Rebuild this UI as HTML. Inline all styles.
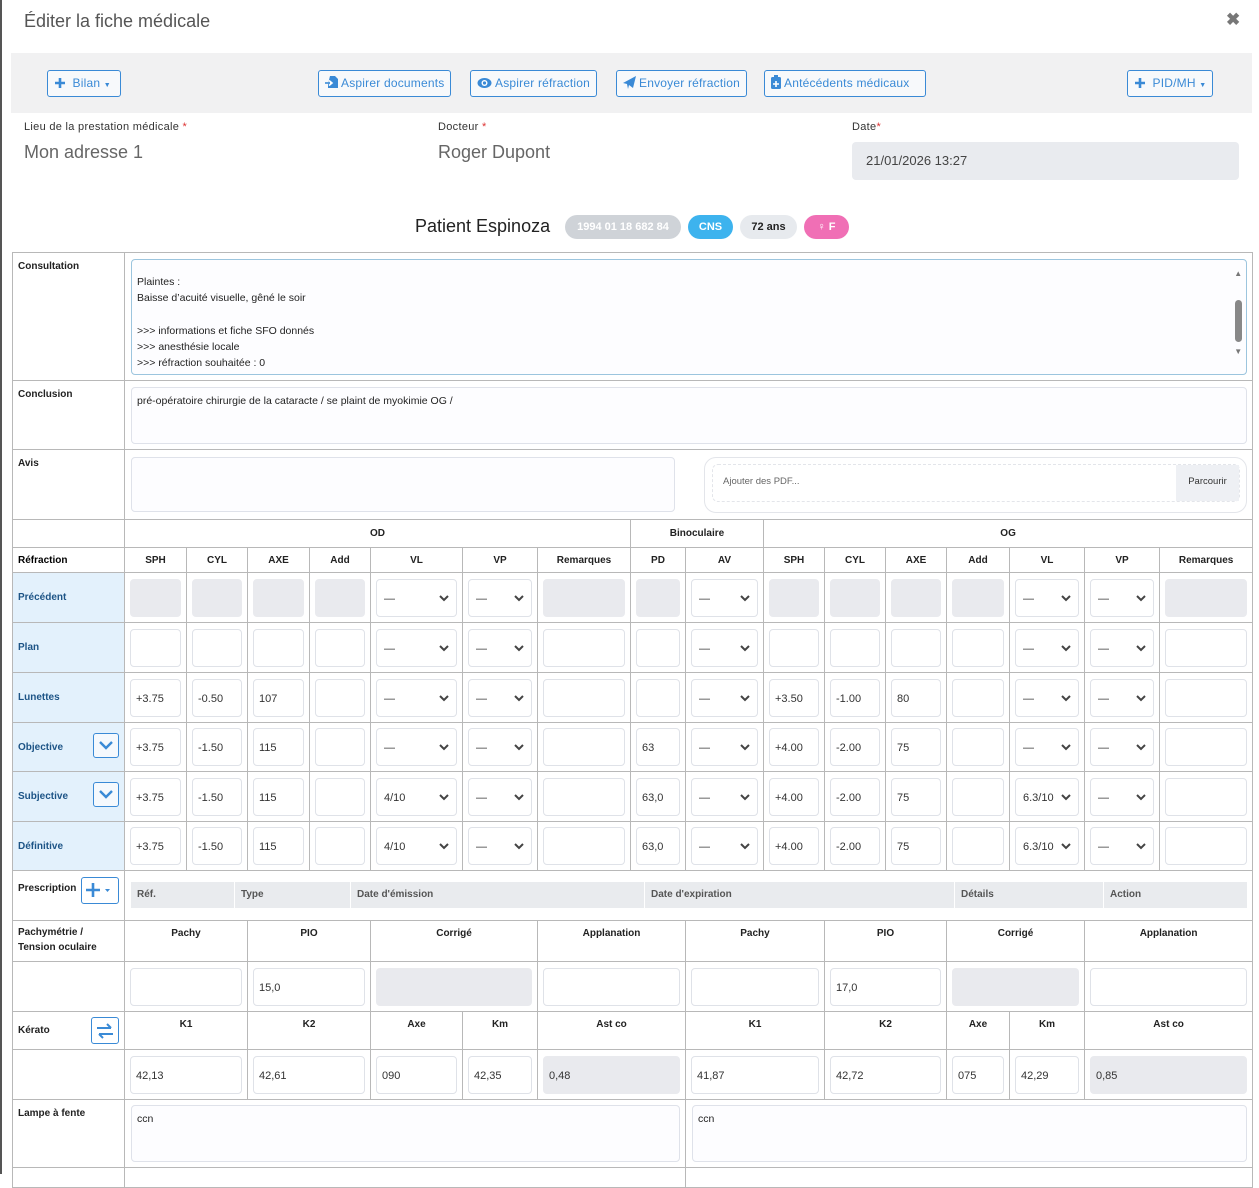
<!DOCTYPE html>
<html><head><meta charset="utf-8">
<style>
*{box-sizing:border-box;margin:0;padding:0}
body{width:1259px;height:1174px;background:#fff;font-family:"Liberation Sans",sans-serif;position:relative;overflow:hidden}
.a{position:absolute}
.title{left:24px;top:11px;font-size:18px;color:#555}
.close{left:1226px;top:10px;font-size:17px;color:#777;font-weight:bold}
.bar{left:11px;top:53px;width:1241px;height:60px;background:#f1f1f2}
.btn{position:absolute;top:70px;height:27px;border:1px solid #3a8ad6;border-radius:3px;color:#3a8ad6;font-size:12px;line-height:25px;padding:0 6px;background:#f7f9fb;white-space:nowrap;letter-spacing:.2px}
.btn svg{vertical-align:-2px;margin-right:3px}
.lbl{font-size:11px;color:#333;letter-spacing:.3px}
.lbl b{color:#d33;font-weight:normal}
.val{font-size:18px;color:#666}
.badge{position:absolute;top:215px;height:24px;border-radius:12px;font-size:11px;font-weight:bold;line-height:24px;text-align:center}
table{position:absolute;left:12px;top:252px;width:1240px;border-collapse:collapse;table-layout:fixed;font-size:10px}
td{border:1px solid #b8b8b8;padding:0 5px;vertical-align:middle}
td.h{font-weight:bold;text-align:center;color:#222}
td.l{font-weight:bold;color:#222;vertical-align:top;padding-top:8px}
td.r{background:#e3f1fc;color:#1d5486;font-weight:bold;vertical-align:middle;padding-top:0;position:relative}
.i{height:38px;border:1px solid #dfe2e8;border-radius:4px;font-size:11px;line-height:38px;padding-left:5px;color:#333;background:#fff}
.g{background:#e9eaee;border-color:#e9eaee}
.s{height:38px;border:1px solid #dfe2e8;border-radius:4px;font-size:11px;line-height:38px;padding-left:7px;color:#333;position:relative;background:#fff}
.s svg{position:absolute;right:7px;top:15px}
.ta{border:1px solid #dfe2ea;border-radius:4px;background:#fdfdff;position:relative;font-size:10.5px;color:#222}
.sq{position:absolute;right:5px;top:10px;width:26px;height:25px;border:1px solid #3a8ad6;border-radius:3px;background:#f5f9fd}
</style></head><body>
<div class="a" style="left:0;top:0;width:2px;height:1174px;background:#555"></div>
<div class="a title">Éditer la fiche médicale</div>
<div class="a close">✖</div>
<div class="a bar"></div>
<div class="btn" style="left:47px;width:74px"><svg width="12" height="12"><path d="M6 1v10M1 6h10" stroke="#3a8ad6" stroke-width="2.6"/></svg> Bilan <span style="font-size:7px">▼</span></div>
<div class="btn" style="left:318px"><svg width="13" height="14"><path d="M5 1h5l3 3v9H3V9" fill="#3a8ad6"/><path d="M0 8h6M4 5.5l3 2.5-3 2.5" stroke="#fff" stroke-width="1.6" fill="none"/><path d="M0 8h5" stroke="#3a8ad6" stroke-width="1.6"/></svg>Aspirer documents</div>
<div class="btn" style="left:470px"><svg width="15" height="12"><ellipse cx="7.5" cy="6" rx="7" ry="5" fill="#3a8ad6"/><circle cx="7.5" cy="6" r="3" fill="#fff"/><circle cx="7.5" cy="6" r="1.6" fill="#3a8ad6"/></svg>Aspirer réfraction</div>
<div class="btn" style="left:616px"><svg width="13" height="13"><path d="M0 7L13 0 10 12 6 9 5 13 4 8z" fill="#3a8ad6"/></svg>Envoyer réfraction</div>
<div class="btn" style="left:764px;width:162px"><svg width="10" height="14"><rect x="0" y="2" width="10" height="12" rx="1.5" fill="#3a8ad6"/><rect x="3" y="0" width="4" height="3" fill="#3a8ad6"/><path d="M5 6v6M2 9h6" stroke="#fff" stroke-width="1.6"/></svg>Antécédents médicaux</div>
<div class="btn" style="left:1127px;width:86px"><svg width="12" height="12"><path d="M6 1v10M1 6h10" stroke="#3a8ad6" stroke-width="2.6"/></svg> PID/MH <span style="font-size:7px">▼</span></div>

<div class="a lbl" style="left:24px;top:121px">Lieu de la prestation médicale <b>*</b></div>
<div class="a val" style="left:24px;top:142px">Mon adresse 1</div>
<div class="a lbl" style="left:438px;top:121px">Docteur <b>*</b></div>
<div class="a val" style="left:438px;top:142px">Roger Dupont</div>
<div class="a lbl" style="left:852px;top:121px">Date<b>*</b></div>
<div class="a" style="left:852px;top:142px;width:387px;height:38px;background:#e9ebef;border-radius:4px;font-size:13px;color:#444;line-height:38px;padding-left:14px">21/01/2026 13:27</div>

<div class="a" style="left:415px;top:216px;font-size:18px;color:#222">Patient Espinoza</div>
<div class="badge" style="left:565px;width:116px;background:#cfd3d8;color:#fff">1994 01 18 682 84</div>
<div class="badge" style="left:688px;width:45px;background:#3db3ee;color:#fff">CNS</div>
<div class="badge" style="left:740px;width:57px;background:#e7eaee;color:#222">72 ans</div>
<div class="badge" style="left:804px;width:45px;background:#f06fb5;color:#fff">♀ F</div>

<table>
<colgroup><col style="width:112px"><col style="width:62px"><col style="width:61px"><col style="width:62px"><col style="width:61px"><col style="width:92px"><col style="width:75px"><col style="width:93px"><col style="width:55px"><col style="width:78px"><col style="width:61px"><col style="width:61px"><col style="width:61px"><col style="width:63px"><col style="width:75px"><col style="width:75px"><col style="width:93px"></colgroup>
<tr style="height:128px"><td class="l">Consultation</td><td colspan="16" style="padding:6px 5px 5px 6px;vertical-align:top"><div class="ta" style="height:116px;border-color:#9cc5de;padding:14px 5px 0 5px;line-height:16.3px;font-size:10.5px">Plaintes :<br>Baisse d’acuité visuelle, gêné le soir<br><br>&gt;&gt;&gt; informations et fiche SFO donnés<br>&gt;&gt;&gt; anesthésie locale<br>&gt;&gt;&gt; réfraction souhaitée : 0<div style="position:absolute;right:4px;top:40px;width:7px;height:42px;background:#888;border-radius:4px"></div><div style="position:absolute;right:4px;top:6px;font-size:8px;color:#777">▲</div><div style="position:absolute;right:4px;top:84px;font-size:8px;color:#777">▼</div></div></td></tr>
<tr style="height:69px"><td class="l">Conclusion</td><td colspan="16" style="padding:5px 5px 5px 6px"><div class="ta" style="height:57px;padding:7px 5px">pré-opératoire chirurgie de la cataracte / se plaint de myokimie OG /</div></td></tr>
<tr style="height:70px"><td class="l">Avis</td><td colspan="16" style="padding:0;position:relative"><div class="ta" style="position:absolute;left:6px;top:7px;width:544px;height:55px"></div><div class="a" style="left:579px;top:7px;width:543px;height:56px;border:1px solid #e3e5ea;border-radius:12px"><div class="a" style="left:7px;top:6px;width:528px;height:38px;border:1px dashed #e3e5ea;border-radius:6px;color:#666;font-size:9.5px;line-height:34px;padding-left:10px">Ajouter des PDF...<div class="a" style="right:0;top:0;width:63px;height:36px;background:#eef0f4;color:#333;text-align:center;line-height:34px">Parcourir</div></div></div></td></tr>
<tr style="height:28px"><td></td><td class="h" colspan="7">OD</td><td class="h" colspan="2">Binoculaire</td><td class="h" colspan="7">OG</td></tr>
<tr style="height:25px"><td style="font-weight:bold">Réfraction</td><td class="h">SPH</td><td class="h">CYL</td><td class="h">AXE</td><td class="h">Add</td><td class="h">VL</td><td class="h">VP</td><td class="h">Remarques</td><td class="h">PD</td><td class="h">AV</td><td class="h">SPH</td><td class="h">CYL</td><td class="h">AXE</td><td class="h">Add</td><td class="h">VL</td><td class="h">VP</td><td class="h">Remarques</td></tr>
<tr style="height:50px"><td class="r">Précédent</td><td><div class="i g"></div></td><td><div class="i g"></div></td><td><div class="i g"></div></td><td><div class="i g"></div></td><td><div class="s g">—<svg width="10" height="7"><path d="M1 1l4 4 4-4" stroke="#444" stroke-width="2" fill="none"/></svg></div></td><td><div class="s g">—<svg width="10" height="7"><path d="M1 1l4 4 4-4" stroke="#444" stroke-width="2" fill="none"/></svg></div></td><td><div class="i g"></div></td><td><div class="i g"></div></td><td><div class="s g">—<svg width="10" height="7"><path d="M1 1l4 4 4-4" stroke="#444" stroke-width="2" fill="none"/></svg></div></td><td><div class="i g"></div></td><td><div class="i g"></div></td><td><div class="i g"></div></td><td><div class="i g"></div></td><td><div class="s g">—<svg width="10" height="7"><path d="M1 1l4 4 4-4" stroke="#444" stroke-width="2" fill="none"/></svg></div></td><td><div class="s g">—<svg width="10" height="7"><path d="M1 1l4 4 4-4" stroke="#444" stroke-width="2" fill="none"/></svg></div></td><td><div class="i g"></div></td></tr>
<tr style="height:50px"><td class="r">Plan</td><td><div class="i"></div></td><td><div class="i"></div></td><td><div class="i"></div></td><td><div class="i"></div></td><td><div class="s">—<svg width="10" height="7"><path d="M1 1l4 4 4-4" stroke="#444" stroke-width="2" fill="none"/></svg></div></td><td><div class="s">—<svg width="10" height="7"><path d="M1 1l4 4 4-4" stroke="#444" stroke-width="2" fill="none"/></svg></div></td><td><div class="i"></div></td><td><div class="i"></div></td><td><div class="s">—<svg width="10" height="7"><path d="M1 1l4 4 4-4" stroke="#444" stroke-width="2" fill="none"/></svg></div></td><td><div class="i"></div></td><td><div class="i"></div></td><td><div class="i"></div></td><td><div class="i"></div></td><td><div class="s">—<svg width="10" height="7"><path d="M1 1l4 4 4-4" stroke="#444" stroke-width="2" fill="none"/></svg></div></td><td><div class="s">—<svg width="10" height="7"><path d="M1 1l4 4 4-4" stroke="#444" stroke-width="2" fill="none"/></svg></div></td><td><div class="i"></div></td></tr>
<tr style="height:50px"><td class="r">Lunettes</td><td><div class="i">+3.75</div></td><td><div class="i">-0.50</div></td><td><div class="i">107</div></td><td><div class="i"></div></td><td><div class="s">—<svg width="10" height="7"><path d="M1 1l4 4 4-4" stroke="#444" stroke-width="2" fill="none"/></svg></div></td><td><div class="s">—<svg width="10" height="7"><path d="M1 1l4 4 4-4" stroke="#444" stroke-width="2" fill="none"/></svg></div></td><td><div class="i"></div></td><td><div class="i"></div></td><td><div class="s">—<svg width="10" height="7"><path d="M1 1l4 4 4-4" stroke="#444" stroke-width="2" fill="none"/></svg></div></td><td><div class="i">+3.50</div></td><td><div class="i">-1.00</div></td><td><div class="i">80</div></td><td><div class="i"></div></td><td><div class="s">—<svg width="10" height="7"><path d="M1 1l4 4 4-4" stroke="#444" stroke-width="2" fill="none"/></svg></div></td><td><div class="s">—<svg width="10" height="7"><path d="M1 1l4 4 4-4" stroke="#444" stroke-width="2" fill="none"/></svg></div></td><td><div class="i"></div></td></tr>
<tr style="height:49px"><td class="r">Objective<div class="sq"><svg width="14" height="9" style="position:absolute;left:5px;top:7px"><path d="M1 1l6 6 6-6" stroke="#3a8ad6" stroke-width="2.4" fill="none"/></svg></div></td><td><div class="i">+3.75</div></td><td><div class="i">-1.50</div></td><td><div class="i">115</div></td><td><div class="i"></div></td><td><div class="s">—<svg width="10" height="7"><path d="M1 1l4 4 4-4" stroke="#444" stroke-width="2" fill="none"/></svg></div></td><td><div class="s">—<svg width="10" height="7"><path d="M1 1l4 4 4-4" stroke="#444" stroke-width="2" fill="none"/></svg></div></td><td><div class="i"></div></td><td><div class="i">63</div></td><td><div class="s">—<svg width="10" height="7"><path d="M1 1l4 4 4-4" stroke="#444" stroke-width="2" fill="none"/></svg></div></td><td><div class="i">+4.00</div></td><td><div class="i">-2.00</div></td><td><div class="i">75</div></td><td><div class="i"></div></td><td><div class="s">—<svg width="10" height="7"><path d="M1 1l4 4 4-4" stroke="#444" stroke-width="2" fill="none"/></svg></div></td><td><div class="s">—<svg width="10" height="7"><path d="M1 1l4 4 4-4" stroke="#444" stroke-width="2" fill="none"/></svg></div></td><td><div class="i"></div></td></tr>
<tr style="height:50px"><td class="r">Subjective<div class="sq"><svg width="14" height="9" style="position:absolute;left:5px;top:7px"><path d="M1 1l6 6 6-6" stroke="#3a8ad6" stroke-width="2.4" fill="none"/></svg></div></td><td><div class="i">+3.75</div></td><td><div class="i">-1.50</div></td><td><div class="i">115</div></td><td><div class="i"></div></td><td><div class="s">4/10<svg width="10" height="7"><path d="M1 1l4 4 4-4" stroke="#444" stroke-width="2" fill="none"/></svg></div></td><td><div class="s">—<svg width="10" height="7"><path d="M1 1l4 4 4-4" stroke="#444" stroke-width="2" fill="none"/></svg></div></td><td><div class="i"></div></td><td><div class="i">63,0</div></td><td><div class="s">—<svg width="10" height="7"><path d="M1 1l4 4 4-4" stroke="#444" stroke-width="2" fill="none"/></svg></div></td><td><div class="i">+4.00</div></td><td><div class="i">-2.00</div></td><td><div class="i">75</div></td><td><div class="i"></div></td><td><div class="s">6.3/10<svg width="10" height="7"><path d="M1 1l4 4 4-4" stroke="#444" stroke-width="2" fill="none"/></svg></div></td><td><div class="s">—<svg width="10" height="7"><path d="M1 1l4 4 4-4" stroke="#444" stroke-width="2" fill="none"/></svg></div></td><td><div class="i"></div></td></tr>
<tr style="height:49px"><td class="r">Définitive</td><td><div class="i">+3.75</div></td><td><div class="i">-1.50</div></td><td><div class="i">115</div></td><td><div class="i"></div></td><td><div class="s">4/10<svg width="10" height="7"><path d="M1 1l4 4 4-4" stroke="#444" stroke-width="2" fill="none"/></svg></div></td><td><div class="s">—<svg width="10" height="7"><path d="M1 1l4 4 4-4" stroke="#444" stroke-width="2" fill="none"/></svg></div></td><td><div class="i"></div></td><td><div class="i">63,0</div></td><td><div class="s">—<svg width="10" height="7"><path d="M1 1l4 4 4-4" stroke="#444" stroke-width="2" fill="none"/></svg></div></td><td><div class="i">+4.00</div></td><td><div class="i">-2.00</div></td><td><div class="i">75</div></td><td><div class="i"></div></td><td><div class="s">6.3/10<svg width="10" height="7"><path d="M1 1l4 4 4-4" stroke="#444" stroke-width="2" fill="none"/></svg></div></td><td><div class="s">—<svg width="10" height="7"><path d="M1 1l4 4 4-4" stroke="#444" stroke-width="2" fill="none"/></svg></div></td><td><div class="i"></div></td></tr>
<tr style="height:50px"><td class="l" style="position:relative;padding-top:12px">Prescription<div class="a" style="left:68px;top:6px;width:38px;height:27px;border:1px solid #3a8ad6;border-radius:3px"><svg width="30" height="20" style="position:absolute;left:4px;top:3px"><path d="M7 2v14M0 9h14" stroke="#3a8ad6" stroke-width="2.6"/><path d="M19 8h5l-2.5 3z" fill="#3a8ad6"/></svg></div></td><td colspan="16" style="padding:0;position:relative;vertical-align:top"><div class="a" style="left:6px;top:11px;width:1116px;height:26px;background:#e9ebee;color:#555;font-size:10px;font-weight:bold;line-height:26px"><span class="a" style="left:6px">Réf.</span><span class="a" style="left:103px;border-left:1px solid #fff;padding-left:6px">Type</span><span class="a" style="left:219px;border-left:1px solid #fff;padding-left:6px">Date d'émission</span><span class="a" style="left:513px;border-left:1px solid #fff;padding-left:6px">Date d'expiration</span><span class="a" style="left:823px;border-left:1px solid #fff;padding-left:6px">Détails</span><span class="a" style="left:972px;border-left:1px solid #fff;padding-left:6px">Action</span></div></td></tr>
<tr style="height:41px"><td class="l" style="line-height:15px;padding-top:4px">Pachymétrie /<br>Tension oculaire</td><td class="h" colspan="2" style="vertical-align:top;padding-top:7px">Pachy</td><td class="h" colspan="2" style="vertical-align:top;padding-top:7px">PIO</td><td class="h" colspan="2" style="vertical-align:top;padding-top:7px">Corrigé</td><td class="h" colspan="2" style="vertical-align:top;padding-top:7px">Applanation</td><td class="h" colspan="2" style="vertical-align:top;padding-top:7px">Pachy</td><td class="h" colspan="2" style="vertical-align:top;padding-top:7px">PIO</td><td class="h" colspan="2" style="vertical-align:top;padding-top:7px">Corrigé</td><td class="h" colspan="2" style="vertical-align:top;padding-top:7px">Applanation</td></tr>
<tr style="height:50px"><td></td><td colspan="2"><div class="i"></div></td><td colspan="2"><div class="i">15,0</div></td><td colspan="2"><div class="i g"></div></td><td colspan="2"><div class="i"></div></td><td colspan="2"><div class="i"></div></td><td colspan="2"><div class="i">17,0</div></td><td colspan="2"><div class="i g"></div></td><td colspan="2"><div class="i"></div></td></tr>
<tr style="height:38px"><td class="l" style="position:relative;vertical-align:middle;padding-top:0">Kérato<div class="a" style="left:78px;top:5px;width:28px;height:27px;border:1px solid #3a8ad6;border-radius:3px"><svg width="18" height="16" style="position:absolute;left:4px;top:5px"><path d="M1 5h14M11 1l4 4M17 11H3M7 15l-4-4" stroke="#3a8ad6" stroke-width="2" fill="none"/></svg></div></td><td class="h" colspan="2" style="vertical-align:top;padding-top:7px">K1</td><td class="h" colspan="2" style="vertical-align:top;padding-top:7px">K2</td><td class="h" style="vertical-align:top;padding-top:7px">Axe</td><td class="h" style="vertical-align:top;padding-top:7px">Km</td><td class="h" colspan="2" style="vertical-align:top;padding-top:7px">Ast co</td><td class="h" colspan="2" style="vertical-align:top;padding-top:7px">K1</td><td class="h" colspan="2" style="vertical-align:top;padding-top:7px">K2</td><td class="h" style="vertical-align:top;padding-top:7px">Axe</td><td class="h" style="vertical-align:top;padding-top:7px">Km</td><td class="h" colspan="2" style="vertical-align:top;padding-top:7px">Ast co</td></tr>
<tr style="height:50px"><td></td><td colspan="2"><div class="i">42,13</div></td><td colspan="2"><div class="i">42,61</div></td><td><div class="i">090</div></td><td><div class="i">42,35</div></td><td colspan="2"><div class="i g">0,48</div></td><td colspan="2"><div class="i">41,87</div></td><td colspan="2"><div class="i">42,72</div></td><td><div class="i">075</div></td><td><div class="i">42,29</div></td><td colspan="2"><div class="i g">0,85</div></td></tr>
<tr style="height:68px"><td class="l">Lampe à fente</td><td colspan="8" style="padding:5px 5px 5px 6px"><div class="ta" style="height:57px;padding:7px 5px">ccn</div></td><td colspan="8" style="padding:5px 5px 5px 6px"><div class="ta" style="height:57px;padding:7px 5px">ccn</div></td></tr>
<tr style="height:20px"><td></td><td colspan="8"></td><td colspan="8"></td></tr>
</table>
</body></html>
